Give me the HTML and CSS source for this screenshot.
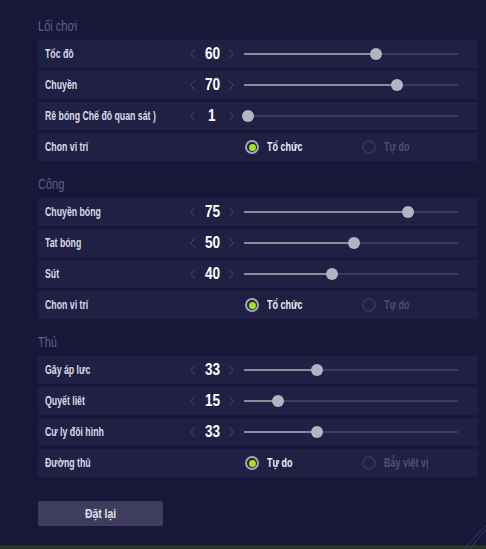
FILE: index.html
```html
<!DOCTYPE html>
<html lang="vi">
<head>
<meta charset="utf-8">
<title>Chiến thuật</title>
<link rel="stylesheet" href="styles.css">
</head>
<body>
<main class="panel">
  <section class="group">
    <h2 class="group-title"><span class="cond">Lối chơi</span></h2>
    <div class="row">
      <span class="label">Tốc đô</span>
      <div class="stepper"><svg class="chev" viewBox="0 0 6 12"><polyline points="5,1 1,6 5,11"/></svg><span class="value">60</span><svg class="chev" viewBox="0 0 6 12"><polyline points="1,1 5,6 1,11"/></svg></div>
      <div class="slider"><div class="track"><div class="fill" style="width:127.6px"></div></div><div class="thumb" style="left:129.6px"></div></div>
    </div>
    <div class="row">
      <span class="label">Chuyền</span>
      <div class="stepper"><svg class="chev" viewBox="0 0 6 12"><polyline points="5,1 1,6 5,11"/></svg><span class="value">70</span><svg class="chev" viewBox="0 0 6 12"><polyline points="1,1 5,6 1,11"/></svg></div>
      <div class="slider"><div class="track"><div class="fill" style="width:149.2px"></div></div><div class="thumb" style="left:151.2px"></div></div>
    </div>
    <div class="row">
      <span class="label">Rê bóng Chế đô quan sát )</span>
      <div class="stepper"><svg class="chev" viewBox="0 0 6 12"><polyline points="5,1 1,6 5,11"/></svg><span class="value">1</span><svg class="chev" viewBox="0 0 6 12"><polyline points="1,1 5,6 1,11"/></svg></div>
      <div class="slider"><div class="track"><div class="fill" style="width:4.2px"></div></div><div class="thumb" style="left:2.2px"></div></div>
    </div>
    <div class="row">
      <span class="label">Chon vi trí</span>
      <div class="radios">
        <span class="radio on"><span class="dot"></span><span class="rtext">Tổ chức</span></span>
        <span class="radio"><span class="dot"></span><span class="rtext">Tự do</span></span>
      </div>
    </div>
  </section>

  <section class="group">
    <h2 class="group-title"><span class="cond">Công</span></h2>
    <div class="row">
      <span class="label">Chuyền bóng</span>
      <div class="stepper"><svg class="chev" viewBox="0 0 6 12"><polyline points="5,1 1,6 5,11"/></svg><span class="value">75</span><svg class="chev" viewBox="0 0 6 12"><polyline points="1,1 5,6 1,11"/></svg></div>
      <div class="slider"><div class="track"><div class="fill" style="width:160px"></div></div><div class="thumb" style="left:162px"></div></div>
    </div>
    <div class="row">
      <span class="label">Tat bóng</span>
      <div class="stepper"><svg class="chev" viewBox="0 0 6 12"><polyline points="5,1 1,6 5,11"/></svg><span class="value">50</span><svg class="chev" viewBox="0 0 6 12"><polyline points="1,1 5,6 1,11"/></svg></div>
      <div class="slider"><div class="track"><div class="fill" style="width:106px"></div></div><div class="thumb" style="left:108px"></div></div>
    </div>
    <div class="row">
      <span class="label">Sút</span>
      <div class="stepper"><svg class="chev" viewBox="0 0 6 12"><polyline points="5,1 1,6 5,11"/></svg><span class="value">40</span><svg class="chev" viewBox="0 0 6 12"><polyline points="1,1 5,6 1,11"/></svg></div>
      <div class="slider"><div class="track"><div class="fill" style="width:84.4px"></div></div><div class="thumb" style="left:86.4px"></div></div>
    </div>
    <div class="row">
      <span class="label">Chon vi trí</span>
      <div class="radios">
        <span class="radio on"><span class="dot"></span><span class="rtext">Tổ chức</span></span>
        <span class="radio"><span class="dot"></span><span class="rtext">Tự do</span></span>
      </div>
    </div>
  </section>

  <section class="group">
    <h2 class="group-title"><span class="cond">Thú</span></h2>
    <div class="row">
      <span class="label">Gây áp lưc</span>
      <div class="stepper"><svg class="chev" viewBox="0 0 6 12"><polyline points="5,1 1,6 5,11"/></svg><span class="value">33</span><svg class="chev" viewBox="0 0 6 12"><polyline points="1,1 5,6 1,11"/></svg></div>
      <div class="slider"><div class="track"><div class="fill" style="width:69.3px"></div></div><div class="thumb" style="left:71.3px"></div></div>
    </div>
    <div class="row">
      <span class="label">Quyết liêt</span>
      <div class="stepper"><svg class="chev" viewBox="0 0 6 12"><polyline points="5,1 1,6 5,11"/></svg><span class="value">15</span><svg class="chev" viewBox="0 0 6 12"><polyline points="1,1 5,6 1,11"/></svg></div>
      <div class="slider"><div class="track"><div class="fill" style="width:30.4px"></div></div><div class="thumb" style="left:32.4px"></div></div>
    </div>
    <div class="row">
      <span class="label">Cư ly đôi hình</span>
      <div class="stepper"><svg class="chev" viewBox="0 0 6 12"><polyline points="5,1 1,6 5,11"/></svg><span class="value">33</span><svg class="chev" viewBox="0 0 6 12"><polyline points="1,1 5,6 1,11"/></svg></div>
      <div class="slider"><div class="track"><div class="fill" style="width:69.3px"></div></div><div class="thumb" style="left:71.3px"></div></div>
    </div>
    <div class="row">
      <span class="label">Đường thủ</span>
      <div class="radios">
        <span class="radio on"><span class="dot"></span><span class="rtext">Tự do</span></span>
        <span class="radio"><span class="dot"></span><span class="rtext">Bẫy việt vị</span></span>
      </div>
    </div>
  </section>

  <button class="reset" type="button"><span class="btext">Đặt lại</span></button>
</main>
<div class="field-edge"></div>
<svg class="corner-lines" viewBox="0 0 30 30"><line x1="8" y1="30" x2="30" y2="6"/><line x1="13" y1="30" x2="30" y2="11"/></svg>
</body>
</html>
```
FILE: styles.css
```css
html, body {
  margin: 0;
  padding: 0;
}
body {
  width: 486px;
  height: 549px;
  overflow: hidden;
  background: #17173a;
  font-family: "Liberation Sans", Arial, sans-serif;
  color: #dcdce8;
  position: relative;
}
.panel {
  padding: 16px 8px 0 38px;
  width: 440px;
  display: flex;
  flex-direction: column;
}
.group {
  display: flex;
  flex-direction: column;
  gap: 3px;
  margin-bottom: 13px;
}
.group-title {
  margin: 0 0 1px 0;
  height: 20px;
  line-height: 20px;
  font-size: 14.5px;
  font-weight: normal;
  color: #5f6088;
}
.cond {
  display: inline-block;
  transform: scaleX(0.76);
  transform-origin: left center;
}
.row {
  height: 28px;
  background: #1f2043;
  display: grid;
  grid-template-columns: 141px 54px 222px;
  align-items: center;
  padding-left: 7px;
}
.label {
  font-size: 12.5px;
  font-weight: bold;
  color: #dcdce8;
  white-space: nowrap;
  transform: scaleX(0.7);
  transform-origin: left center;
}
.stepper {
  display: flex;
  align-items: center;
  justify-content: space-between;
  padding: 0 6px 0 4px;
}
.chev {
  width: 6px;
  height: 12px;
  fill: none;
  stroke: #3c3d66;
  stroke-width: 1.2;
}
.value {
  font-size: 17px;
  font-weight: bold;
  color: #ffffff;
  line-height: 20px;
  transform: scaleX(0.8);
}
.slider {
  position: relative;
  height: 14px;
  display: flex;
  align-items: center;
}
.track {
  margin-left: 4px;
  width: 214px;
  height: 2px;
  background: #3a3b60;
}
.fill {
  height: 2px;
  background: #8a8a98;
}
.thumb {
  position: absolute;
  top: 1px;
  width: 12px;
  height: 12px;
  border-radius: 50%;
  background: #b4b3c0;
}
.radios {
  grid-column: 3;
  display: grid;
  grid-template-columns: 117px 100px;
  padding-left: 5px;
  align-items: center;
}
.radio {
  display: flex;
  align-items: center;
  gap: 8px;
  font-size: 12.5px;
  font-weight: bold;
  color: #4f5078;
}
.rtext {
  display: inline-block;
  white-space: nowrap;
  transform: scaleX(0.72);
  transform-origin: left center;
}
.radio .dot {
  flex: none;
  box-sizing: border-box;
  width: 14px;
  height: 14px;
  border-radius: 50%;
  border: 2px solid #33345a;
  display: flex;
  align-items: center;
  justify-content: center;
}
.radio.on {
  color: #f0f0f6;
}
.radio.on .dot {
  border-color: #a4a4b2;
}
.radio.on .dot::after {
  content: "";
  width: 7px;
  height: 7px;
  border-radius: 50%;
  background: #a6e41c;
}
.reset {
  margin-top: 11px;
  width: 125px;
  height: 25px;
  border: none;
  border-radius: 2px;
  background: #3e3d5d;
  color: #e2e2ec;
  font-family: inherit;
  font-size: 13px;
  font-weight: bold;
  padding: 0;
}
.btext {
  display: inline-block;
  transform: scaleX(0.8);
}
.field-edge {
  position: absolute;
  left: 0;
  right: 0;
  bottom: 0;
  height: 4px;
  background: linear-gradient(#22302a, #2b3a24);
}
.corner-lines {
  position: absolute;
  right: 0;
  bottom: 0;
  width: 30px;
  height: 30px;
  stroke: #3a3c60;
  stroke-width: 1;
}
```
